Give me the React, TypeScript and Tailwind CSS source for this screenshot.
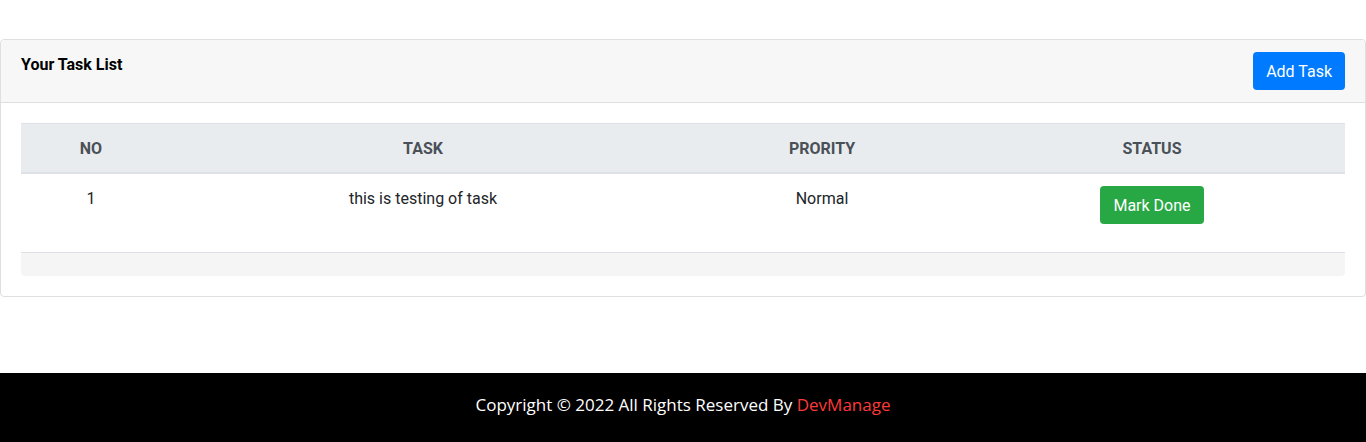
import React from 'react';

type Task = { id: number; title: string; priority: string };

const tasks: Task[] = [{ id: 1, title: 'this is testing of task', priority: 'Normal' }];

const App: React.FC = () => {
  return (
    <div className="min-h-[442px] flex flex-col bg-white text-[#212529] font-['Roboto',sans-serif]">
      <div className="pt-[39px] pb-[76px]">
        <div className="border border-[#dfdfdf] rounded-[4px] bg-white">
          {/* card header */}
          <div className="flex justify-between items-start px-[20px] pt-[12px] pb-[12px] bg-[#f7f7f7] border-b border-[#dfdfdf] rounded-t-[4px]">
            <h5 className="pt-[1px] text-[16px] leading-[24px] font-bold text-black">Your Task List</h5>
            <button className="h-[38px] px-[13px] pt-[2px] bg-[#007bff] text-white text-[16px] rounded-[4px] leading-[24px]">
              Add Task
            </button>
          </div>

          {/* card body */}
          <div className="p-[20px]">
            <table className="w-full border-collapse text-center text-[16px]">
              <thead>
                <tr className="bg-[#e9ecef] text-[#495057] border-t border-[#dee2e6]">
                  <th className="w-[140px] pt-[13px] pb-[11px] leading-[24px] font-bold border-b-2 border-[#dee2e6]">NO</th>
                  <th className="w-[524px] pt-[13px] pb-[11px] leading-[24px] font-bold border-b-2 border-[#dee2e6]">TASK</th>
                  <th className="w-[274px] pt-[13px] pb-[11px] leading-[24px] font-bold border-b-2 border-[#dee2e6]">PRORITY</th>
                  <th className="pt-[13px] pb-[11px] leading-[24px] font-bold border-b-2 border-[#dee2e6]">STATUS</th>
                </tr>
              </thead>
              <tbody>
                {tasks.map(t => (
                  <tr key={t.id} className="border-b border-[#dee2e6]">
                    <td className="h-[79px] align-top pt-[13px] leading-[24px]">{t.id}</td>
                    <td className="align-top pt-[13px] leading-[24px]">{t.title}</td>
                    <td className="align-top pt-[13px] leading-[24px]">{t.priority}</td>
                    <td className="align-top pt-[12px]">
                      <button className="h-[38px] px-[13px] pt-[2px] bg-[#28a745] text-white text-[16px] rounded-[4px] leading-[24px]">
                        Mark Done
                      </button>
                    </td>
                  </tr>
                ))}
              </tbody>
            </table>
            <div className="h-[23px] bg-[#f5f5f5] rounded-b-[4px]" />
          </div>
        </div>
      </div>

      <footer className="flex-1 bg-black flex justify-center pt-[20px] pb-[25px]">
        <p className="text-white text-[17px] leading-[24px] font-['Open_Sans',sans-serif]">
          Copyright © 2022 All Rights Reserved By <span className="text-[#ff3838]">DevManage</span>
        </p>
      </footer>
    </div>
  );
};

export default App;
